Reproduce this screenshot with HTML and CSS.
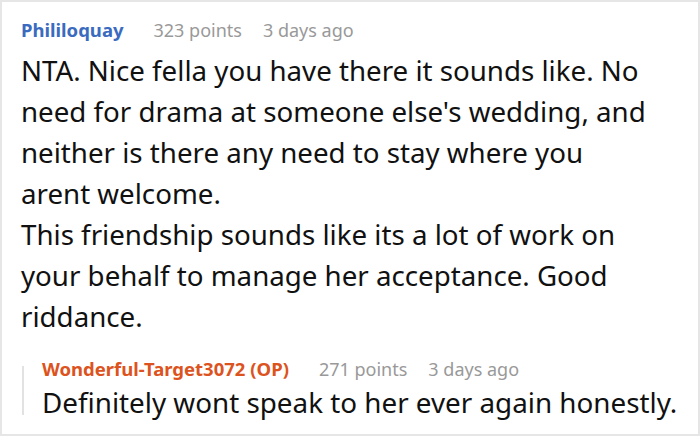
FILE: index.html
```html
<!DOCTYPE html>
<html>
<head>
<meta charset="utf-8">
<link rel="stylesheet" href="styles.css">
</head>
<body>
<div class="frame">
  <div class="comment">
    <div class="meta">
      <span class="author">Phililoquay</span>
      <span class="info">323 points</span>
      <span class="info">3 days ago</span>
    </div>
    <div class="text">NTA. Nice fella you have there it sounds like. No need for drama at someone else's wedding, and neither is there any need to stay where you arent welcome.<br>This friendship sounds like its a lot of work on your behalf to manage her acceptance. Good riddance.</div>
  </div>
  <div class="reply">
    <div class="thread-line"></div>
    <div class="reply-body">
      <div class="meta">
        <span class="author op">Wonderful-Target3072 (OP)</span>
        <span class="info">271 points</span>
        <span class="info">3 days ago</span>
      </div>
      <div class="reply-text">Definitely wont speak to her ever again honestly.</div>
    </div>
  </div>
</div>
</body>
</html>
```
FILE: styles.css
```css
html, body {
  margin: 0;
  padding: 0;
  background: #fff;
}
.frame {
  width: 700px;
  height: 436px;
  box-sizing: border-box;
  border: 2px solid #e6e6e6;
  padding: 14px 4px 0 19px;
  font-family: "Noto Sans", sans-serif;
  color: #111;
  overflow: hidden;
}
.meta {
  display: flex;
  gap: 21px;
  font-size: 18px;
  line-height: 28px;
  white-space: nowrap;
}
.author {
  font-size: 18.5px;
  font-weight: bold;
  color: #3b6bbf;
  margin-right: 9px;
}
.author.op {
  color: #dc5320;
}
.info {
  color: #999;
}
.text {
  font-size: 27.7px;
  line-height: 41px;
  margin-top: 6px;
  max-width: 630px;
}
.reply {
  display: flex;
  margin-top: 18px;
  gap: 18px;
}
.thread-line {
  width: 2px;
  background: #e2e2e2;
  margin: 11px 0 6px 1px;
  flex: none;
}
.reply-text {
  font-size: 27.8px;
  line-height: 38px;
  white-space: nowrap;
}
```
